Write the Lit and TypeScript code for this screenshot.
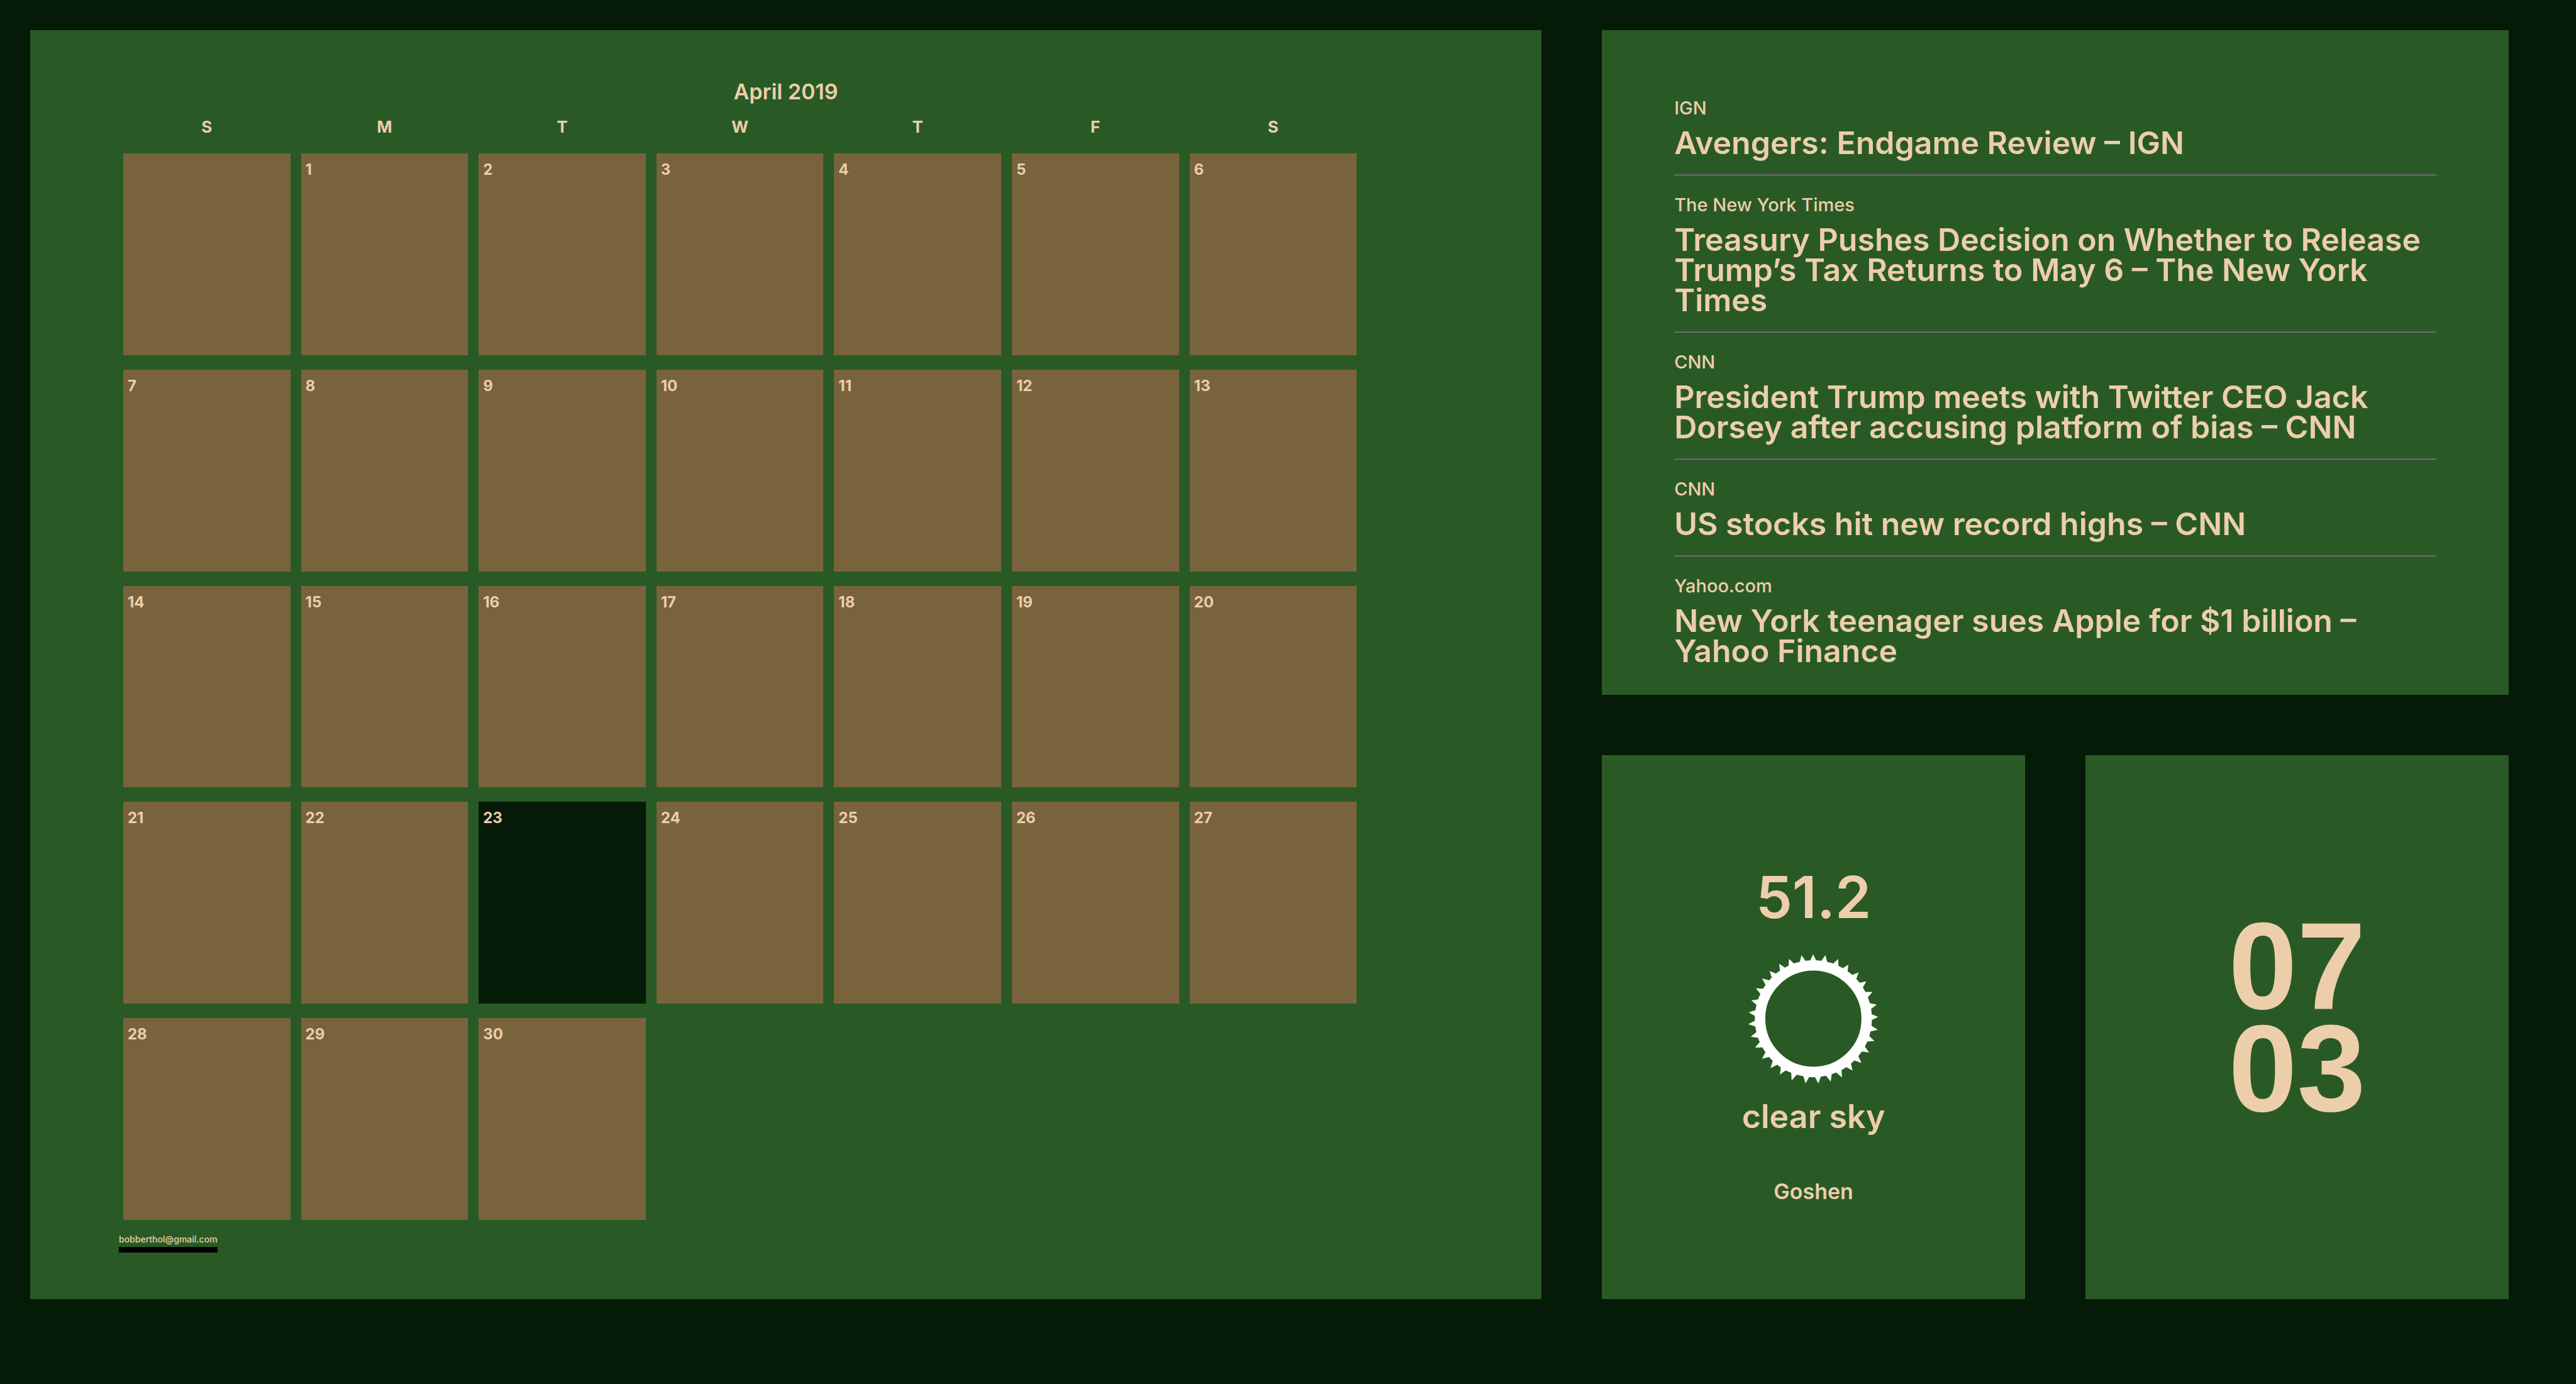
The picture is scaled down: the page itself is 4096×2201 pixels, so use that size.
import { LitElement, html, css, svg, nothing } from "lit";
import { customElement, property } from "lit/decorators.js";
import { classMap } from "lit/directives/class-map.js";

interface Story {
  source: string;
  title: string;
}

const STORIES: Story[] = [
  { source: "IGN", title: "Avengers: Endgame Review – IGN" },
  {
    source: "The New York Times",
    title:
      "Treasury Pushes Decision on Whether to Release Trump’s Tax Returns to May 6 – The New York Times",
  },
  {
    source: "CNN",
    title:
      "President Trump meets with Twitter CEO Jack Dorsey after accusing platform of bias – CNN",
  },
  { source: "CNN", title: "US stocks hit new record highs – CNN" },
  {
    source: "Yahoo.com",
    title: "New York teenager sues Apple for $1 billion – Yahoo Finance",
  },
];

const WEEKDAYS = [
  ["S", "Sunday"],
  ["M", "Monday"],
  ["T", "Tuesday"],
  ["W", "Wednesday"],
  ["T", "Thursday"],
  ["F", "Friday"],
  ["S", "Saturday"],
];

/** Splits a month into weeks; 0 stands for a slot before the first day. */
function weeksOf(firstWeekday: number, length: number): number[][] {
  const slots = [
    ...Array<number>(firstWeekday).fill(0),
    ...Array.from({ length }, (_, i) => i + 1),
  ];
  const weeks: number[][] = [];
  for (let i = 0; i < slots.length; i += 7) weeks.push(slots.slice(i, i + 7));
  return weeks;
}

@customElement("month-calendar")
export class MonthCalendar extends LitElement {
  @property() heading = "";
  @property() account = "";
  @property({ type: Number }) firstWeekday = 0;
  @property({ type: Number }) days = 30;
  @property({ type: Number }) today = 0;

  static styles = css`
    :host {
      display: flex;
      flex-direction: column;
      box-sizing: border-box;
      padding: 78px 141px 74px;
      background: var(--panel);
    }
    .heading {
      margin: 0 0 16px;
      font-size: 34px;
      line-height: 40px;
      font-weight: 600;
      text-align: center;
    }
    .month {
      flex: 1;
      display: flex;
      flex-direction: column;
      gap: 22px;
      margin: 0 153px 0 7px;
    }
    .weeks {
      flex: 1;
      display: grid;
      grid-auto-rows: 1fr;
      gap: 23px;
    }
    .week {
      display: grid;
      grid-template-columns: repeat(7, 1fr);
      gap: 17px;
    }
    .weekday {
      padding: 0;
      font-size: 26px;
      line-height: 40px;
      font-weight: 700;
      text-align: center;
    }
    .day {
      padding: 14px 7px;
      background: var(--cell);
      font-size: 24px;
      line-height: 24px;
      font-weight: 700;
    }
    .today {
      background: var(--page);
    }
    .account {
      align-self: flex-start;
      margin-top: 21px;
      padding-bottom: 2px;
      border-bottom: 9px solid #000;
      color: inherit;
      font-size: 14px;
      line-height: 20px;
      font-weight: 500;
      text-decoration: none;
    }
  `;

  render() {
    return html`
      <h1 class="heading" id="heading">${this.heading}</h1>
      <table class="month" aria-labelledby="heading">
        <thead>
          <tr class="week">
            ${WEEKDAYS.map(
              ([letter, name]) =>
                html`<th class="weekday" scope="col" abbr=${name}>${letter}</th>`
            )}
          </tr>
        </thead>
        <tbody class="weeks">
          ${weeksOf(this.firstWeekday, this.days).map(
            (week) => html`<tr class="week">
              ${week.map(
                (day) =>
                  html`<td class=${classMap({ day: true, today: day === this.today })}>
                    ${day || nothing}
                  </td>`
              )}
            </tr>`
          )}
        </tbody>
      </table>
      <a class="account" href="mailto:${this.account}">${this.account}</a>
    `;
  }
}

@customElement("news-feed")
export class NewsFeed extends LitElement {
  @property({ attribute: false }) stories: Story[] = [];

  static styles = css`
    :host {
      display: block;
      box-sizing: border-box;
      padding: 108px 115px 40px;
      background: var(--panel);
    }
    .source {
      margin: 0 0 15px;
      font-size: 29px;
      line-height: 32px;
      font-weight: 500;
    }
    .title {
      margin: 0;
      font-size: 50px;
      line-height: 48px;
      font-weight: 600;
    }
    .rule {
      height: 0;
      margin: 25px 0 31px;
      border: 0 solid;
      border-width: 2px 0 1px;
      border-color: #4e544e #4e544e #808580;
    }
  `;

  render() {
    return this.stories.map(
      (story, i) => html`
        ${i ? html`<hr class="rule" />` : nothing}
        <article>
          <p class="source">${story.source}</p>
          <h2 class="title">${story.title}</h2>
        </article>
      `
    );
  }
}

/** Tips of the rays around the clear-sky ring, clockwise from the top. */
const RAY_TIPS: [number, number][] = [
  [387, 62], [448, 66], [511, 86], [562, 114], [613, 152], [651, 197],
  [682, 249], [703, 312], [710, 373], [708, 437], [691, 493], [665, 550],
  [627, 602], [583, 640], [530, 674], [474, 694], [413, 704], [349, 704],
  [280, 689], [222, 659], [175, 627], [133, 581], [98, 526], [77, 472],
  [65, 409], [67, 351], [80, 291], [103, 231], [133, 182], [171, 145],
  [218, 109], [267, 85], [329, 67],
];
const CX = 388;
const CY = 382;

function ray([x, y]: [number, number]) {
  const angle = Math.atan2(y - CY, x - CX);
  const foot = (turn: number) =>
    `${(CX + 286 * Math.cos(angle + turn)).toFixed(1)},${(CY + 286 * Math.sin(angle + turn)).toFixed(1)}`;
  return svg`<polygon points="${foot(-0.058)} ${x},${y} ${foot(0.058)}" />`;
}

@customElement("weather-card")
export class WeatherCard extends LitElement {
  @property() temperature = "";
  @property() sky = "";
  @property() place = "";

  static styles = css`
    :host {
      display: flex;
      flex-direction: column;
      align-items: center;
      box-sizing: border-box;
      padding: 178px 40px 40px;
      background: var(--panel);
      font-weight: 600;
      text-align: center;
    }
    p {
      margin: 0;
    }
    .temperature {
      font-size: 92px;
      line-height: 96px;
    }
    .icon {
      width: 212px;
      height: 208px;
      margin: 42px 0 19px;
      fill: #fff;
    }
    .sky {
      margin-bottom: 67px;
      font-size: 52px;
      line-height: 64px;
    }
    .place {
      font-size: 34px;
      line-height: 40px;
    }
  `;

  render() {
    return html`
      <p class="temperature">${this.temperature}</p>
      <svg class="icon" viewBox="60 60 660 650" aria-hidden="true">
        <circle cx=${CX} cy=${CY} r="265" fill="none" stroke="#fff" stroke-width="52" />
        ${RAY_TIPS.map(ray)}
      </svg>
      <p class="sky">${this.sky}</p>
      <p class="place">${this.place}</p>
    `;
  }
}

@customElement("wall-clock")
export class WallClock extends LitElement {
  @property() hours = "";
  @property() minutes = "";

  static styles = css`
    :host {
      display: flex;
      align-items: center;
      justify-content: center;
      box-sizing: border-box;
      padding-bottom: 32px;
      background: var(--panel);
    }
    .time {
      white-space: pre-line;
      font: 700 196px/163px "Liberation Sans", Arial, sans-serif;
    }
  `;

  render() {
    return html`<time class="time" datetime="${this.hours}:${this.minutes}"
      >${`${this.hours}\n${this.minutes}`}</time
    >`;
  }
}

@customElement("app-root")
export class AppRoot extends LitElement {
  static styles = css`
    :host {
      --page: #061a08;
      --panel: #295a25;
      --cell: #79633d;
      display: block;
      background: var(--page);
      color: #edceab;
      font-family: Inter, sans-serif;
    }
    .board {
      display: grid;
      grid-template-columns: 25fr 15fr;
      gap: 96px;
      box-sizing: border-box;
      min-height: 100vh;
      padding: 48px 107px 135px 48px;
    }
    .side {
      display: grid;
      grid-template: 11fr 9fr / 1fr 1fr;
      gap: 96px;
    }
    .news {
      grid-column: span 2;
    }
  `;

  render() {
    return html`
      <main class="board">
        <month-calendar
          heading="April 2019"
          account="bobberthol@gmail.com"
          .firstWeekday=${1}
          .days=${30}
          .today=${23}
        ></month-calendar>
        <div class="side">
          <news-feed class="news" .stories=${STORIES}></news-feed>
          <weather-card temperature="51.2" sky="clear sky" place="Goshen"></weather-card>
          <wall-clock hours="07" minutes="03"></wall-clock>
        </div>
      </main>
    `;
  }
}
